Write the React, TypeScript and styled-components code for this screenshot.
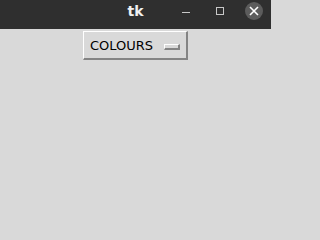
import React from "react";
import styled, { createGlobalStyle } from "styled-components";

const Global = createGlobalStyle`
  html, body { margin: 0; padding: 0; background: #d9d9d9; }
  body { overflow: hidden; }
`;

const Window = styled.div`
  width: 271px;
  height: 216px;
  display: flex;
  flex-direction: column;
  background: #d9d9d9;
`;

const TitleBar = styled.div`
  height: 29px;
  box-sizing: border-box;
  padding-bottom: 7px;
  background: #2f2f2f;
  display: grid;
  grid-template-columns: 1fr auto 1fr;
  align-items: center;
`;

const Title = styled.div`
  grid-column: 2;
  color: #f0f0f0;
  font-family: "DejaVu Sans", sans-serif;
  font-weight: bold;
  font-size: 14px;
  line-height: 16px;
`;

const Controls = styled.div`
  grid-column: 3;
  justify-self: end;
  display: flex;
`;

const Slot = styled.div`
  width: 34px;
  height: 18px;
  display: flex;
  align-items: center;
  justify-content: center;
`;

const CloseCircle = styled.div`
  width: 18px;
  height: 18px;
  border-radius: 50%;
  background: #5c5c5c;
  display: flex;
  align-items: center;
  justify-content: center;
`;

const Content = styled.div`
  flex: 1;
  display: flex;
  flex-direction: column;
  align-items: center;
  padding-top: 2px;
`;

const MenuButton = styled.div`
  box-sizing: border-box;
  height: 29px;
  width: 105px;
  display: flex;
  align-items: center;
  padding: 0 0 0 6px;
  background: #d9d9d9;
  border-top: 1px solid #ffffff;
  border-left: 1px solid #ffffff;
  border-right: 2px solid #848484;
  border-bottom: 2px solid #848484;
  font-family: "DejaVu Sans", sans-serif;
  font-size: 13px;
  color: #000;
`;

const Label = styled.span`
  line-height: 16px;
  margin-top: 1px;
`;

const Indicator = styled.span`
  box-sizing: border-box;
  width: 16px;
  height: 6px;
  margin-left: 11px;
  margin-top: 3px;
  background: #d9d9d9;
  border-top: 1px solid #ffffff;
  border-left: 1px solid #ffffff;
  border-right: 2px solid #848484;
  border-bottom: 2px solid #848484;
`;

export default function App() {
  return (
    <>
      <Global />
      <Window>
        <TitleBar>
          <Title>tk</Title>
          <Controls>
            <Slot>
              <svg width="10" height="10" viewBox="0 0 10 10">
                <rect x="1" y="6" width="8" height="1" fill="#c8c8c8" />
              </svg>
            </Slot>
            <Slot>
              <svg width="10" height="10" viewBox="0 0 10 10">
                <rect x="1.5" y="1.5" width="7" height="7" fill="none" stroke="#c8c8c8" strokeWidth="1" />
              </svg>
            </Slot>
            <Slot>
              <CloseCircle>
                <svg width="10" height="10" viewBox="0 0 10 10">
                  <path d="M1 1 L9 9 M9 1 L1 9" stroke="#ffffff" strokeWidth="1.6" />
                </svg>
              </CloseCircle>
            </Slot>
          </Controls>
        </TitleBar>
        <Content>
          <MenuButton>
            <Label>COLOURS</Label>
            <Indicator />
          </MenuButton>
        </Content>
      </Window>
    </>
  );
}
